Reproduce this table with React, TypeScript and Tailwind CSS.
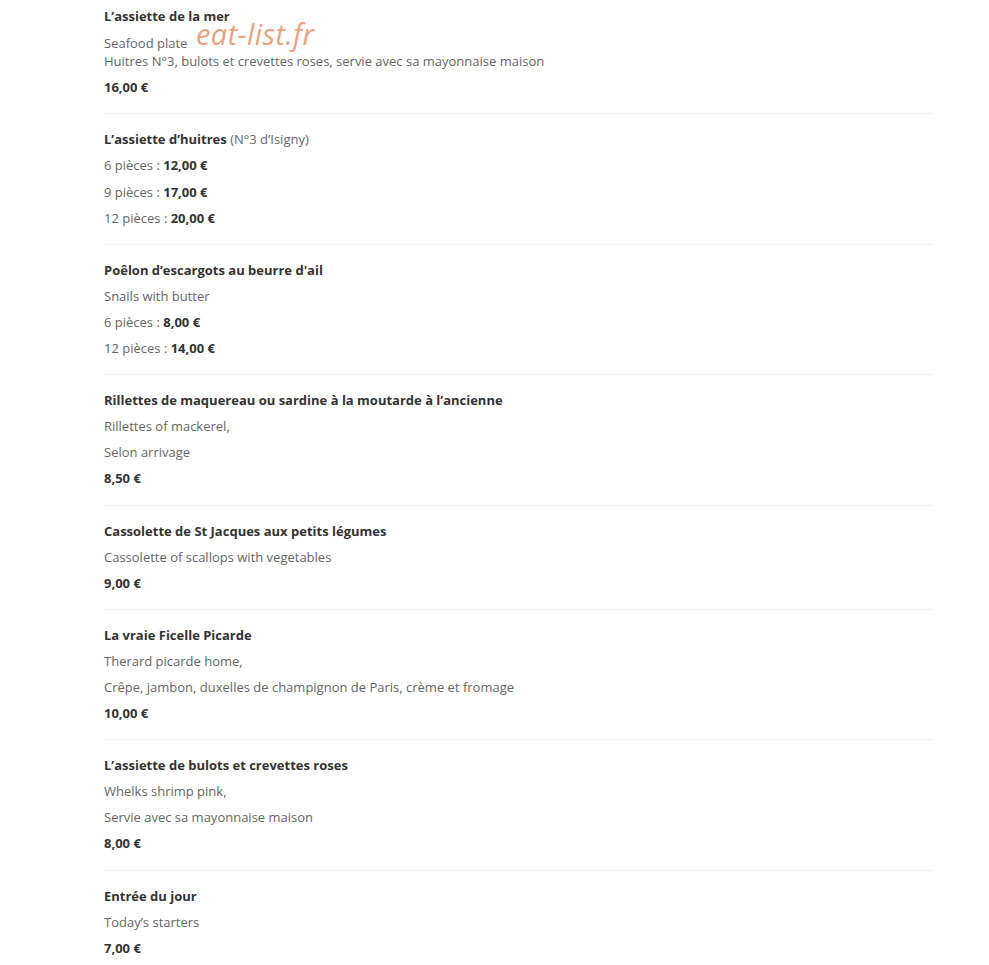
import React from "react";

type Line = { text: string; price?: string };
type Item = { title: string; note?: string; lines: (string | Line)[]; price?: string };

const items: Item[] = [
  {
    title: "L’assiette de la mer",
    lines: ["Seafood plate\nHuitres N°3, bulots et crevettes roses, servie avec sa mayonnaise maison"],
    price: "16,00 €",
  },
  {
    title: "L’assiette d’huitres",
    note: "(N°3 d’Isigny)",
    lines: [
      { text: "6 pièces : ", price: "12,00 €" },
      { text: "9 pièces : ", price: "17,00 €" },
      { text: "12 pièces : ", price: "20,00 €" },
    ],
  },
  {
    title: "Poêlon d’escargots au beurre d'ail",
    lines: [
      "Snails with butter",
      { text: "6 pièces : ", price: "8,00 €" },
      { text: "12 pièces : ", price: "14,00 €" },
    ],
  },
  {
    title: "Rillettes de maquereau ou sardine à la moutarde à l’ancienne",
    lines: ["Rillettes of mackerel,", "Selon arrivage"],
    price: "8,50 €",
  },
  {
    title: "Cassolette de St Jacques aux petits légumes",
    lines: ["Cassolette of scallops with vegetables"],
    price: "9,00 €",
  },
  {
    title: "La vraie Ficelle Picarde",
    lines: ["Therard picarde home,", "Crêpe, jambon, duxelles de champignon de Paris, crème et fromage"],
    price: "10,00 €",
  },
  {
    title: "L’assiette de bulots et crevettes roses",
    lines: ["Whelks shrimp pink,", "Servie avec sa mayonnaise maison"],
    price: "8,00 €",
  },
  {
    title: "Entrée du jour",
    lines: ["Today’s starters"],
    price: "7,00 €",
  },
];

function MenuItem({ item, first }: { item: Item; first: boolean }) {
  return (
    <div className={`flex flex-col gap-2 ${first ? "pt-[7px]" : "border-t border-[#f0f0f0] pt-4"} pb-[17px]`}>
      <p className={`leading-[18.1px] font-bold text-[#333] ${first ? "mb-px" : ""}`}>
        {item.title}
        {item.note && <span className="font-normal text-[#666]"> {item.note}</span>}
      </p>
      {item.lines.map((l, i) =>
        typeof l === "string" ? (
          <p key={i} className="whitespace-pre-line leading-[18.1px] text-[#666]">
            {l}
          </p>
        ) : (
          <p key={i} className="leading-[18.1px] text-[#666]">
            {l.text}
            <span className="font-bold text-[#333]">{l.price}</span>
          </p>
        ),
      )}
      {item.price && <p className="leading-[18.1px] font-bold text-[#333]">{item.price}</p>}
    </div>
  );
}

export default function App() {
  return (
    <div className="min-h-[965px] w-[989px] bg-white font-['Open_Sans',sans-serif] text-[13px]">
      <div className="relative ml-[104px] w-[830px]">
        {items.map((it, i) => (
          <MenuItem key={i} item={it} first={i === 0} />
        ))}
        <span className="pointer-events-none absolute left-[92px] top-[19px] text-[29px] leading-none italic tracking-[0.4px] text-[#eea17e]">
          eat-list.fr
        </span>
      </div>
    </div>
  );
}
